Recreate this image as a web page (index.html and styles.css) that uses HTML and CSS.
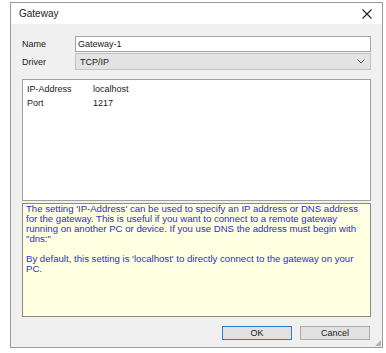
FILE: index.html
```html
<!DOCTYPE html>
<html lang="en">
  <head>
    <meta charset="UTF-8" />
    <title>Gateway</title>
    <link rel="stylesheet" href="styles.css">
  </head>
  <body>
    <div class="window">
      <div class="titlebar">
        <span class="title">Gateway</span>
        <svg class="close" width="10" height="10" viewBox="0 0 10 10">
          <path d="M0.5 0.5 L9.5 9.5 M9.5 0.5 L0.5 9.5" stroke="#222" stroke-width="1.1" fill="none" />
        </svg>
      </div>
      <div class="content">
        <div class="field">
          <label>Name</label>
          <div class="input">Gateway-1</div>
        </div>
        <div class="field">
          <label>Driver</label>
          <div class="select">
            <span>TCP/IP</span>
            <svg width="8" height="5" viewBox="0 0 8 5">
              <path d="M0.5 0.5 L4 4 L7.5 0.5" stroke="#555" stroke-width="1" fill="none" />
            </svg>
          </div>
        </div>
        <div class="settings">
          <div class="row"><span class="key">IP-Address</span><span>localhost</span></div>
          <div class="row"><span class="key">Port</span><span>1217</span></div>
        </div>
        <div class="help">
          <p>The setting 'IP-Address' can be used to specify an IP address or DNS address<br>
          for the gateway. This is useful if you want to connect to a remote gateway<br>
          running on another PC or device. If you use DNS the address must begin with<br>
          "dns:"</p>
          <p>By default, this setting is 'localhost' to directly connect to the gateway on your<br>
          PC.</p>
        </div>
        <div class="buttons">
          <button class="btn default">OK</button>
          <button class="btn">Cancel</button>
        </div>
      </div>
      <div class="grip"></div>
    </div>
  </body>
</html>
```

FILE: styles.css
```css
body {
  margin: 0;
  background-color: #ffffff;
  font-family: "Liberation Sans", Arial, sans-serif;
  font-size: 9px;
  color: #1a1a1a;
}
.window {
  position: relative;
  margin: 2px 0 0 10px;
  width: 371px;
  height: 344px;
  border: 1px solid #9a9a9a;
  display: flex;
  flex-direction: column;
}
.titlebar {
  height: 21px;
  background-color: #ffffff;
  display: flex;
  align-items: center;
  justify-content: space-between;
  padding: 0 10px 0 8px;
}
.title {
  font-size: 10px;
  color: #222;
}
.content {
  flex: 1;
  background-color: #f0f0f0;
  padding: 12px 11px 0 11px;
  display: flex;
  flex-direction: column;
}
.field {
  display: flex;
  align-items: center;
  margin-bottom: 1px;
}
.field label {
  width: 53px;
  flex: none;
}
.input {
  flex: 1;
  height: 14px;
  line-height: 14px;
  padding-left: 2px;
  background-color: #ffffff;
  border: 1px solid #a5a5a5;
}
.select {
  flex: 1;
  height: 15px;
  display: flex;
  align-items: center;
  justify-content: space-between;
  padding: 0 5px 0 4px;
  background-color: #e3e3e3;
  border: 1px solid #c4c4c4;
}
.settings {
  margin-top: 8px;
  height: 122px;
  box-sizing: border-box;
  background-color: #ffffff;
  border: 1px solid #a0a0a0;
  padding: 2px 4px;
}
.row {
  display: flex;
  height: 14px;
  line-height: 14px;
}
.key {
  width: 66px;
  flex: none;
}
.help {
  margin-top: 2px;
  height: 114px;
  box-sizing: border-box;
  background-color: #ffffe1;
  border: 1px solid #8a8a8a;
  padding: 0 3px;
  color: #2e2ed0;
  font-size: 9.6px;
  line-height: 10px;
}
.help p {
  margin: 0 0 10px 0;
  white-space: nowrap;
}
.buttons {
  display: flex;
  justify-content: flex-end;
  gap: 8px;
  margin-top: 9px;
  padding-right: 1px;
}
.btn {
  width: 70px;
  height: 14px;
  padding: 0;
  font-family: "Liberation Sans", Arial, sans-serif;
  font-size: 9px;
  color: #1a1a1a;
  background-color: #e1e1e1;
  border: 1px solid #adadad;
}
.btn.default {
  border-color: #2a7fcf;
}
.grip {
  position: absolute;
  right: 1px;
  bottom: 1px;
  width: 6px;
  height: 6px;
  background-image: radial-gradient(circle, #b5b5b5 0.8px, transparent 1px);
  background-size: 2px 2px;
  clip-path: polygon(100% 0, 100% 100%, 0 100%);
}
```
